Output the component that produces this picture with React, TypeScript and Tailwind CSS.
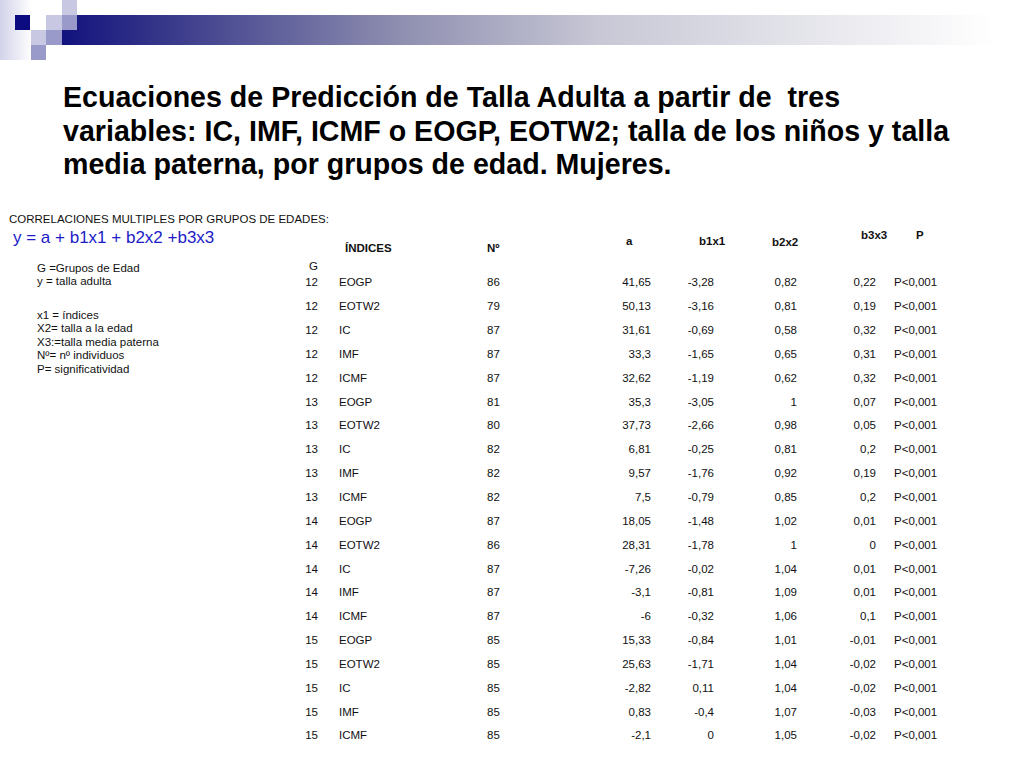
import React from "react";

type Row = [string, string, string, string, string, string, string];

const rows: Row[] = [
  ["12", "EOGP", "86", "41,65", "-3,28", "0,82", "0,22"],
  ["12", "EOTW2", "79", "50,13", "-3,16", "0,81", "0,19"],
  ["12", "IC", "87", "31,61", "-0,69", "0,58", "0,32"],
  ["12", "IMF", "87", "33,3", "-1,65", "0,65", "0,31"],
  ["12", "ICMF", "87", "32,62", "-1,19", "0,62", "0,32"],
  ["13", "EOGP", "81", "35,3", "-3,05", "1", "0,07"],
  ["13", "EOTW2", "80", "37,73", "-2,66", "0,98", "0,05"],
  ["13", "IC", "82", "6,81", "-0,25", "0,81", "0,2"],
  ["13", "IMF", "82", "9,57", "-1,76", "0,92", "0,19"],
  ["13", "ICMF", "82", "7,5", "-0,79", "0,85", "0,2"],
  ["14", "EOGP", "87", "18,05", "-1,48", "1,02", "0,01"],
  ["14", "EOTW2", "86", "28,31", "-1,78", "1", "0"],
  ["14", "IC", "87", "-7,26", "-0,02", "1,04", "0,01"],
  ["14", "IMF", "87", "-3,1", "-0,81", "1,09", "0,01"],
  ["14", "ICMF", "87", "-6", "-0,32", "1,06", "0,1"],
  ["15", "EOGP", "85", "15,33", "-0,84", "1,01", "-0,01"],
  ["15", "EOTW2", "85", "25,63", "-1,71", "1,04", "-0,02"],
  ["15", "IC", "85", "-2,82", "0,11", "1,04", "-0,02"],
  ["15", "IMF", "85", "0,83", "-0,4", "1,07", "-0,03"],
  ["15", "ICMF", "85", "-2,1", "0", "1,05", "-0,02"],
];

const cols = "grid grid-cols-[22px_169px_73px_91px_63px_83px_79px_84px]";

// decorative squares + gradient bar of the slide template
const HeaderArt = () => (
  <svg width="1024" height="60" viewBox="0 0 1024 60" className="block">
    <defs>
      <linearGradient id="fade" x1="0" y1="0" x2="1" y2="0">
        <stop offset="0" stopColor="#d2d2ea" />
        <stop offset="1" stopColor="#ffffff" />
      </linearGradient>
      <linearGradient id="bar" x1="0" y1="0" x2="1" y2="0">
        <stop offset="0" stopColor="#12127e" />
        <stop offset="0.12" stopColor="#3c3c8c" />
        <stop offset="0.35" stopColor="#8e8eb0" />
        <stop offset="0.56" stopColor="#c8c8d6" />
        <stop offset="0.97" stopColor="#ffffff" />
      </linearGradient>
    </defs>
    <rect x="0" y="0" width="32" height="60" fill="url(#fade)" />
    <rect x="62" y="15" width="962" height="30" fill="url(#bar)" />
    <rect x="62" y="0" width="15" height="15" fill="#c8c8e2" />
    <rect x="15" y="15" width="15" height="15" fill="#0c0c80" />
    <rect x="46" y="15" width="16" height="15" fill="#c8c8e2" />
    <rect x="62" y="15" width="15" height="15" fill="#9a9aca" />
    <rect x="31" y="30" width="15" height="15" fill="#c8c8e2" />
    <rect x="46" y="30" width="16" height="15" fill="#9a9aca" />
    <rect x="31" y="45" width="15" height="15" fill="#9a9aca" />
  </svg>
);

export default function App() {
  return (
    <div className="w-[1024px] h-[768px] bg-white overflow-hidden text-[#111] font-['Liberation_Sans',Arial,sans-serif]">
      <HeaderArt />

      <h1 className="mt-[21px] pl-[63px] text-[28.6px] leading-[33.5px] font-bold text-black">
        Ecuaciones de Predicción de Talla Adulta a partir de{"\u00a0"} tres
        <br />
        variables: IC, IMF, ICMF o EOGP, EOTW2; talla de los niños y talla
        <br />
        media paterna, por grupos de edad. Mujeres.
      </h1>

      <div className="mt-[31px] pl-[9px] text-[11.5px] leading-[13px]">
        CORRELACIONES MULTIPLES POR GRUPOS DE EDADES:
      </div>

      <div className="flex">
        <div className="w-[296px] shrink-0">
          <div className="mt-[2px] pl-[13px] text-[17px] leading-[20px] text-[#1c1cc8]">
            y = a + b1x1 + b2x2 +b3x3
          </div>
          <div className="mt-[14px] pl-[37px] text-[11.5px] leading-[13.5px]">
            <div>G =Grupos de Edad</div>
            <div>y = talla adulta</div>
            <div className="mt-[20px]">x1 = índices</div>
            <div>X2= talla a la edad</div>
            <div>X3:=talla media paterna</div>
            <div>Nº= nº individuos</div>
            <div>P= significatividad</div>
          </div>
        </div>

        <div className="mt-[3.5px] text-[11.5px] leading-[13px] whitespace-nowrap">
          <div className={`${cols} h-[27px] font-bold`}>
            <div />
            <div className="pl-[27px] pt-[13px]">ÍNDICES</div>
            <div className="pt-[13px]">Nº</div>
            <div className="pl-[66px] pt-[6px]">a</div>
            <div className="pl-[48px] pt-[6px]">b1x1</div>
            <div className="pl-[58px] pt-[7px]">b2x2</div>
            <div className="pl-[64px]">b3x3</div>
            <div className="pl-[40px]">P</div>
          </div>
          <div className={`${cols} h-[15px]`}>
            <div className="text-right pt-[3.5px]">G</div>
          </div>
          {rows.map((r, i) => (
            <div key={i} className={`${cols} h-[23.85px] items-center`}>
              <div className="text-right">{r[0]}</div>
              <div className="pl-[21px]">{r[1]}</div>
              <div>{r[2]}</div>
              <div className="text-right">{r[3]}</div>
              <div className="text-right">{r[4]}</div>
              <div className="text-right">{r[5]}</div>
              <div className="text-right">{r[6]}</div>
              <div className="pl-[18px]">P&lt;0,001</div>
            </div>
          ))}
        </div>
      </div>
    </div>
  );
}
